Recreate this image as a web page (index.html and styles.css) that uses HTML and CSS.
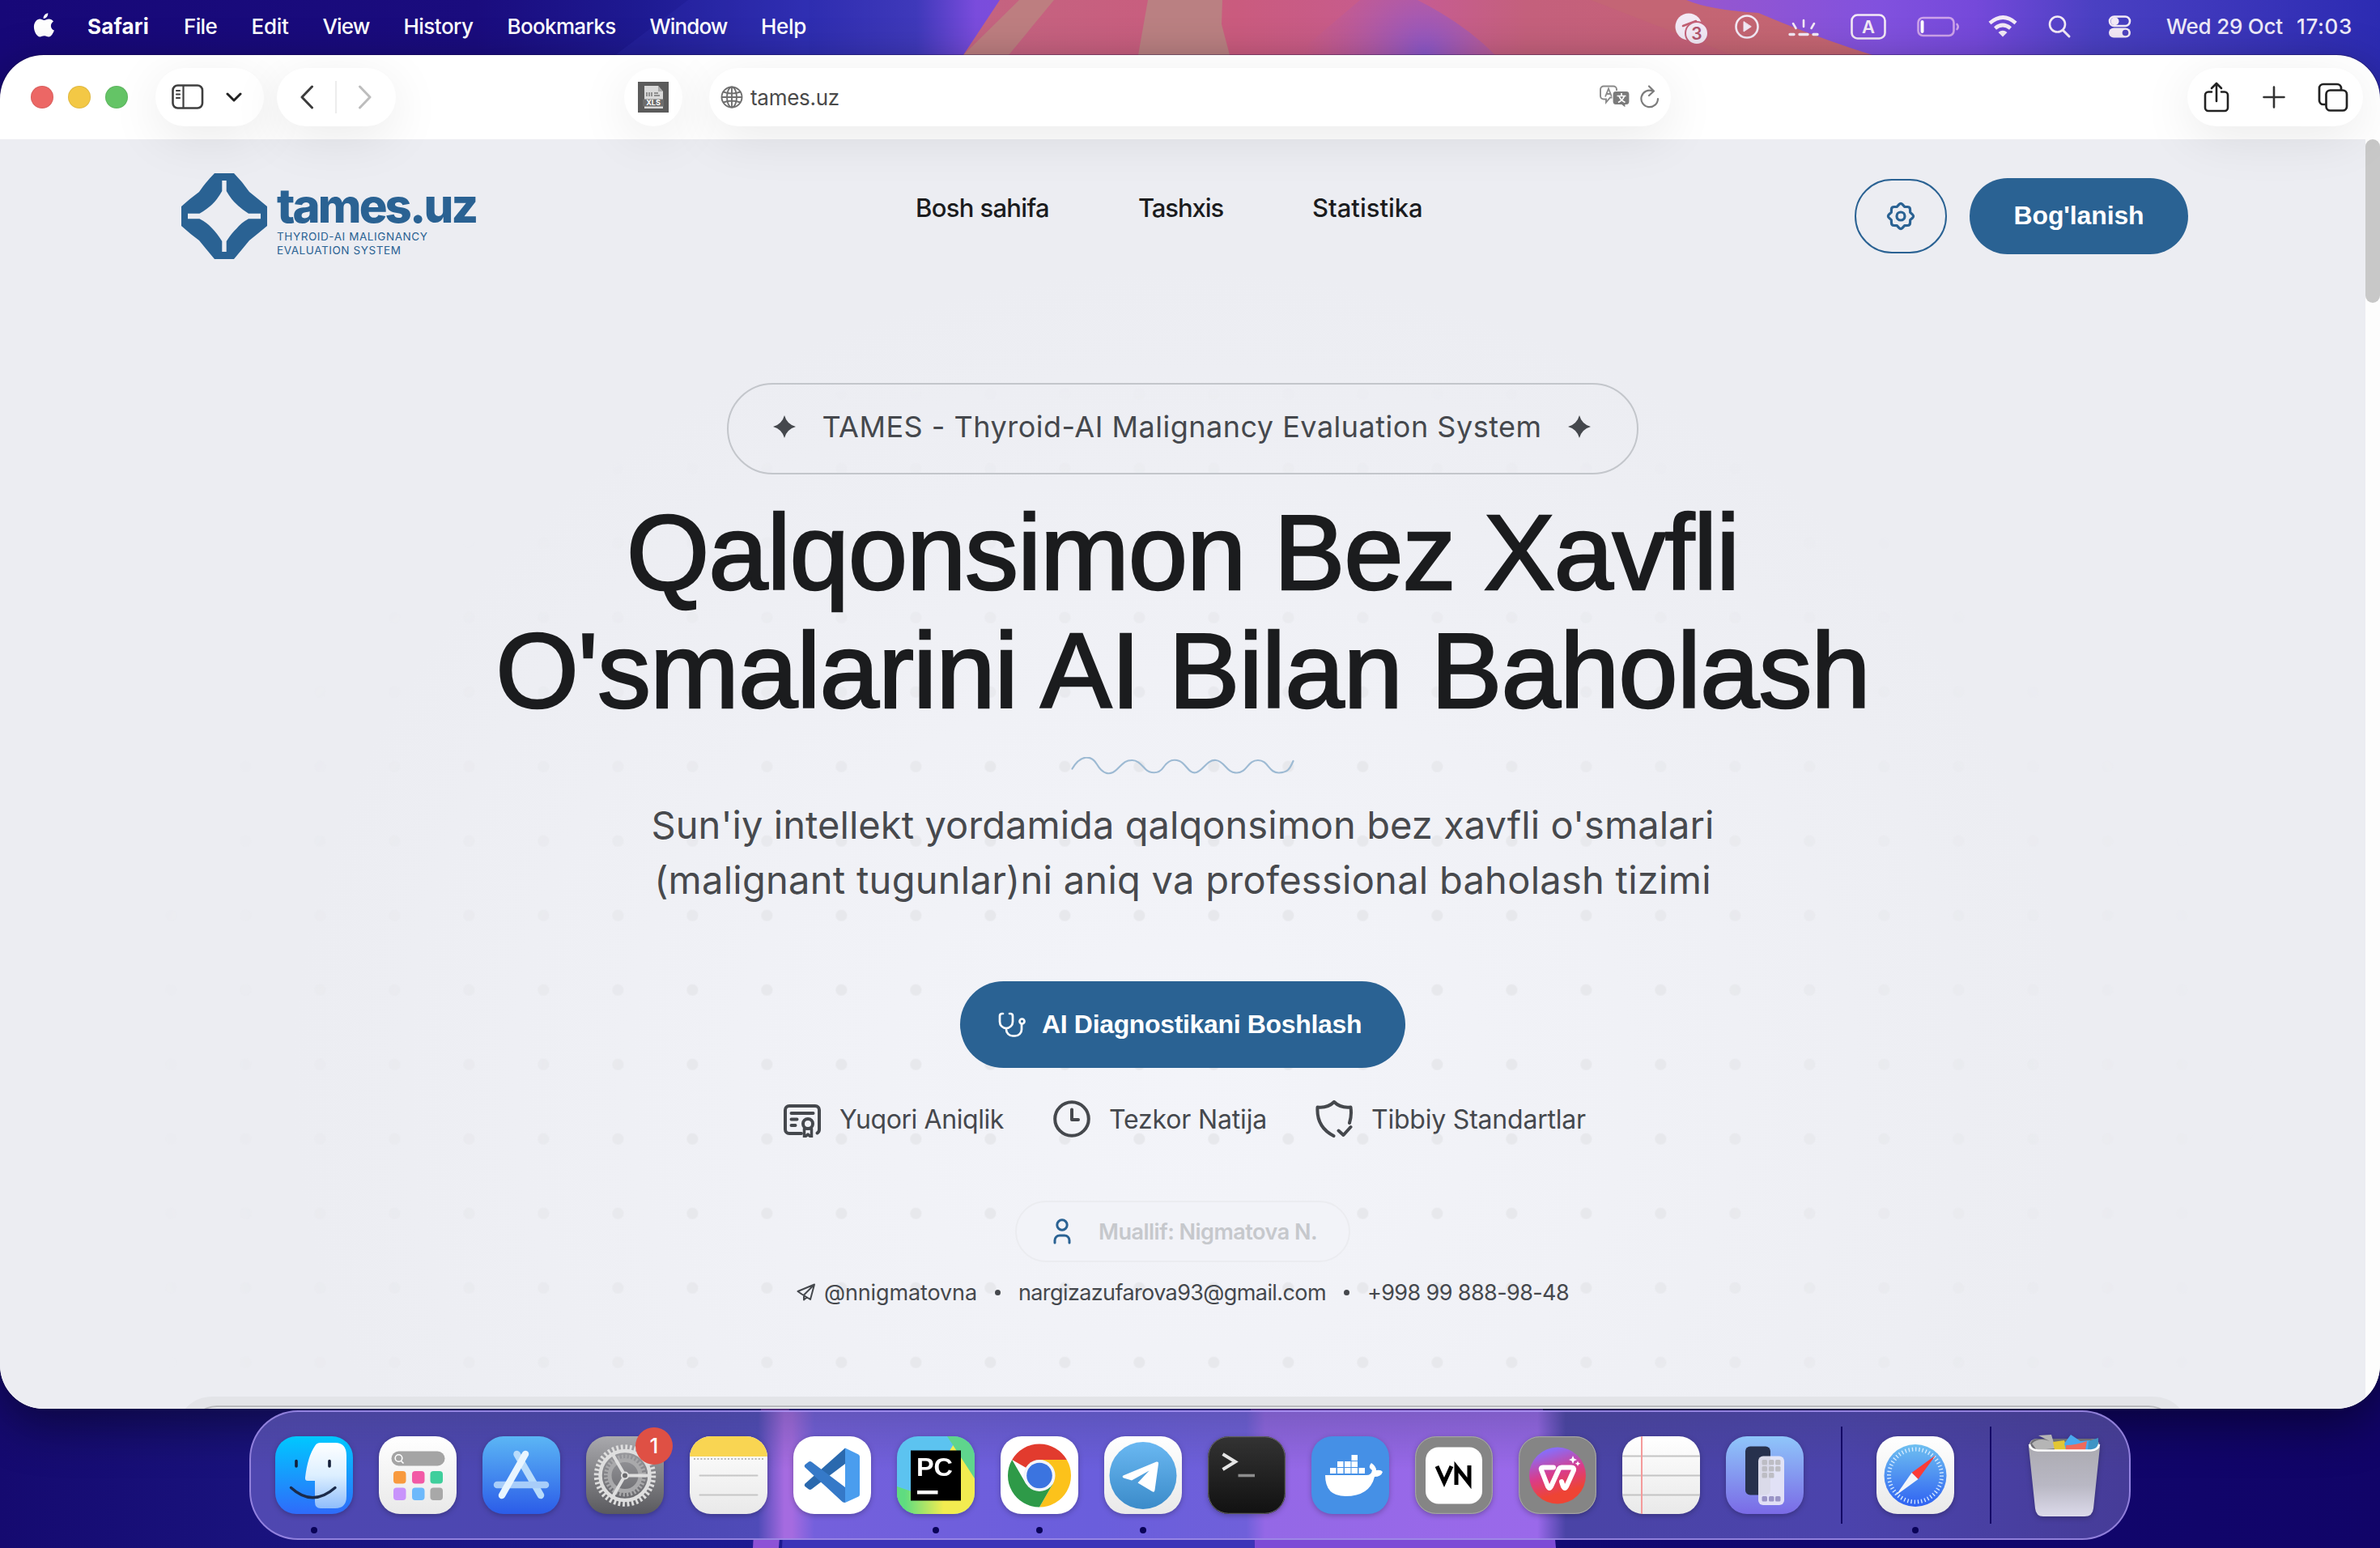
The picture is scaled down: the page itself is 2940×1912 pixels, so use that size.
FILE: index.html
```html
<!DOCTYPE html>
<html lang="uz">
<head>
<meta charset="utf-8">
<title>tames.uz</title>
<link rel="stylesheet" href="styles.css">
</head>
<body>
<svg class="wallpaper" viewBox="0 0 2940 1912" preserveAspectRatio="none">
  <defs>
    <linearGradient id="wTop" x1="0" y1="0" x2="2940" y2="0" gradientUnits="userSpaceOnUse">
      <stop offset="0" stop-color="#170878"/><stop offset=".2" stop-color="#1a0c7e"/><stop offset=".27" stop-color="#1e1a92"/><stop offset=".34" stop-color="#2e2db0"/><stop offset=".385" stop-color="#3f39ba"/><stop offset=".41" stop-color="#7a4cdc"/><stop offset=".7" stop-color="#9a58cc"/><stop offset=".79" stop-color="#8151de"/><stop offset=".83" stop-color="#7549da"/><stop offset=".88" stop-color="#4a40c2"/><stop offset="1" stop-color="#2c2bb2"/>
    </linearGradient>
    <linearGradient id="wPink" x1="1190" y1="0" x2="2313" y2="0" gradientUnits="userSpaceOnUse">
      <stop offset="0" stop-color="#c46480"/><stop offset=".3" stop-color="#ca5b7e"/><stop offset=".5" stop-color="#c65c92"/><stop offset=".62" stop-color="#c4607c"/><stop offset="1" stop-color="#c66274"/>
    </linearGradient>
    <radialGradient id="wGlow" cx="1760" cy="68" r="150" gradientUnits="userSpaceOnUse"><stop offset="0" stop-color="#8a58cc"/><stop offset="1" stop-color="#b65aa4" stop-opacity="0"/></radialGradient>
    <linearGradient id="wLow" x1="0" y1="0" x2="2940" y2="0" gradientUnits="userSpaceOnUse">
      <stop offset="0" stop-color="#150a70"/><stop offset=".1" stop-color="#19127c"/><stop offset=".3" stop-color="#1d1b92"/><stop offset=".7" stop-color="#110870"/><stop offset="1" stop-color="#110468"/>
    </linearGradient>
  </defs>
  <rect width="2940" height="956" fill="url(#wTop)"/>
  <path d="M760 68L850 0H1000V68Z" fill="#3535bd" opacity=".2"/>
  <path d="M1190 68L1235 0H2083Q2110 12 2172 16Q2240 45 2313 68Z" fill="url(#wPink)"/>
  <path d="M1190 68L1259 0H1302L1246 68Z" fill="#bd7e80"/>
  <path d="M1418 0H1510L1509 30L1519 68H1406Z" fill="#ba8082"/>
  <path d="M1600 68L1680 0H1751Q1810 30 1847 68Z" fill="url(#wGlow)"/>
  <path d="M1965 0H2083Q2110 12 2172 16Q2240 45 2313 68H2140Z" fill="#c46a70" opacity=".5"/>
  <rect y="956" width="2940" height="956" fill="url(#wLow)"/>
  <path d="M940 1740H975L962 1912H930Z" fill="#8d52d6"/>
  <path d="M975 1740H1545L1550 1912H966Z" fill="#3c34b8"/>
  <path d="M1545 1740H1906L1922 1912H1550Z" fill="#7d4bd6"/>
</svg>
<div class="screen">
  <header class="menubar">
    <svg class="apple" viewBox="0 0 26 31"><path d="M13 9c1.600 0 3.400-1.600 6-1.600 2.200 0 4.300 1.200 5.500 3-4.600 2.800-3.900 9.200.9 11.100-1 3-3.600 8-6.600 8.100-2 .1-2.900-1.300-5.500-1.300s-3.500 1.200-5.400 1.300C4 29.700.4 22.600.4 17.300.4 11.600 4 7.600 7.700 7.600c2.300 0 4 1.400 5.300 1.400zM17.800.2c.3 3.600-2.400 6.700-5.700 6.700C11.800 3.500 14.600.500 17.800.2z" fill="#fff"/></svg>
    <nav class="menus">
      <b class="m1">Safari</b><span class="m2">File</span><span class="m3">Edit</span><span class="m4">View</span><span class="m5">History</span><span class="m6">Bookmarks</span><span class="m7">Window</span><span class="m8">Help</span>
    </nav>
    <svg class="status" viewBox="2060 0 580 68" fill="none" stroke="#f3eaf6" stroke-width="2.600" stroke-linecap="round" stroke-linejoin="round">
      <circle cx="2086" cy="33" r="16.500" fill="#f3eaf6" stroke="none"/><path d="M2079 32l16-6-3 12" stroke="#c25f72"/><circle cx="2096" cy="41" r="14" fill="#f3eaf6" stroke="#c4627a" stroke-width="2"/><text x="2096" y="48.500" text-anchor="middle" class="stxt" fill="#b3566e" stroke="none">3</text>
      <circle cx="2158" cy="33" r="13.500"/><path d="M2154 27v12l9-6z" fill="#f3eaf6" stroke-width="1"/>
      <path d="M2228 25v8M2215 29l3.500 6M2241 29l-3.500 6"/><path d="M2211 42.500h5M2223 42.500h10M2240 42.500h5" stroke-width="3.400"/>
      <rect x="2287.500" y="18.500" width="41" height="29" rx="7"/><text x="2308" y="41" text-anchor="middle" class="stxt a" fill="#f3eaf6" stroke="none">A</text>
      <rect x="2369.500" y="22" width="44" height="22" rx="6" stroke="#cda3ea"/><path d="M2374.500 27v12" stroke="#fff" stroke-width="4"/><path d="M2417.500 30q2.500 3 0 6" stroke="#cda3ea"/>
      <g stroke-width="4.600" stroke-linecap="butt"><path d="M2458 28.500q16.500-14 32 0M2464.500 35q9.500-8 19 0"/></g><path d="M2468.500 40q5.500-4.500 11 0l-5.500 5.500z" fill="#f3eaf6" stroke="none"/>
      <circle cx="2541.500" cy="30" r="9.500"/><path d="M2548.500 37.500l7.500 7.500" stroke-width="3"/>
      <rect x="2606" y="20.500" width="25" height="11.500" rx="5.700"/><circle cx="2612.500" cy="26.300" r="5" fill="#f3eaf6" stroke="none"/><rect x="2605" y="34.500" width="27" height="12" rx="6" fill="#f3eaf6" stroke="none"/><circle cx="2625.500" cy="40.500" r="3.800" fill="#5045c0" stroke="none"/>
    </svg>
    <div class="clock"><span class="date">Wed 29 Oct</span><span class="time">17:03</span></div>
  </header>

  <main class="window">
    <div class="toolbar">
      <div class="lights"><i class="r"></i><i class="y"></i><i class="g"></i></div>
      <div class="pill side">
        <svg width="40" height="32" viewBox="0 0 40 32" fill="none" stroke="#3f3f3f" stroke-width="2.600" stroke-linecap="round"><rect x="1.500" y="1.500" width="36.500" height="28" rx="6"/><path d="M14.500 2v27M6 8h4M6 12.500h4M6 17h4" stroke-width="2.200"/></svg>
        <svg width="20" height="12" viewBox="0 0 20 12" fill="none" stroke="#222" stroke-width="3" stroke-linecap="round" stroke-linejoin="round"><path d="M2 2l8 8 8-8"/></svg>
      </div>
      <div class="pill nav2">
        <svg width="18" height="30" viewBox="0 0 18 30" fill="none" stroke="#3c3c3c" stroke-width="3" stroke-linecap="round" stroke-linejoin="round"><path d="M15.500 2L3 15l12.500 13"/></svg>
        <i class="vr"></i>
        <svg width="18" height="30" viewBox="0 0 18 30" fill="none" stroke="#bdbdbd" stroke-width="3" stroke-linecap="round" stroke-linejoin="round"><path d="M2.500 2L15 15 2.500 28"/></svg>
      </div>
      <div class="pill xls">
        <svg width="38" height="38" viewBox="0 0 38 38"><rect width="38" height="38" fill="#5b5b5b"/><path d="M8 5h17l6 7v21H8z" fill="#d9d9d9"/><path d="M25 5v7h6z" fill="#aaa"/><path d="M11 18v-5M14 18v-5M17 18v-5M20 17h7M20 14h5" stroke="#777" stroke-width="1.500"/><rect x="6" y="21.500" width="26" height="9" fill="#6c6c6c"/><text x="19" y="29" text-anchor="middle" class="xt">XLS</text></svg>
      </div>
      <div class="pill addr">
        <svg width="28" height="28" viewBox="0 0 28 28" fill="none" stroke="#6f6f6f" stroke-width="1.900"><circle cx="14" cy="14" r="12.500"/><ellipse cx="14" cy="14" rx="6" ry="12.500"/><path d="M14 1.500v25M1.500 14h25M3.500 7.500q10.500 4 21 0M3.500 20.500q10.500-4 21 0"/></svg>
        <span class="url">tames.uz</span>
        <svg class="tr" width="40" height="30" viewBox="0 0 40 30"><path d="M6 1.500h12a4 4 0 0 1 4 4v10H14l-5 6v-4H6a4 4 0 0 1-4-4v-8a4 4 0 0 1 4-4z" fill="none" stroke="#8a8a8a" stroke-width="1.900"/><path d="M8 14.500l4-10 4 10M9.500 11h5" fill="none" stroke="#8a8a8a" stroke-width="1.800"/><path d="M21 7.500h13a4 4 0 0 1 4 4v9a4 4 0 0 1-4 4h-1v4l-5-4h-7a4 4 0 0 1-4-4v-9a4 4 0 0 1 4-4z" fill="#7b7b7b" stroke="#fff" stroke-width="1.200"/><path d="M28 10v3M22.500 13.500h11M24 21.500q6-3 7.500-8M32.500 21.500q-6-3-7.500-8" fill="none" stroke="#fff" stroke-width="1.700"/></svg>
        <svg width="24" height="30" viewBox="0 0 24 30" fill="none" stroke="#7c7c7c" stroke-width="2.200" stroke-linecap="round" stroke-linejoin="round"><path d="M15.500 7.300A10.300 10.300 0 1 0 22 17M11 1.500l6 6-6 5.500"/></svg>
      </div>
      <div class="pill acts">
        <svg width="32" height="38" viewBox="0 0 32 38" fill="none" stroke="#222" stroke-width="2.600" stroke-linecap="round" stroke-linejoin="round"><path d="M10 12.500H6a4 4 0 0 0-4 4V32a4 4 0 0 0 4 4h20a4 4 0 0 0 4-4V16.500a4 4 0 0 0-4-4h-4M16 24V2.500M10 8l6-6 6 6"/></svg>
        <svg width="28" height="28" viewBox="0 0 28 28" stroke="#333" stroke-width="2.600" stroke-linecap="round"><path d="M14 1.500v25M1.500 14h25"/></svg>
        <svg width="38" height="36" viewBox="0 0 38 36" fill="none" stroke="#222" stroke-width="2.700" stroke-linejoin="round"><rect x="10.500" y="9.500" width="25.500" height="25" rx="5"/><path d="M10 27H7a5 5 0 0 1-5-5V7a5 5 0 0 1 5-5h17a5 5 0 0 1 5 5v2"/></svg>
      </div>
    </div>

    <div class="viewport">
      <div class="page">
        <header class="site">
          <div class="logo">
            <svg width="106" height="106" viewBox="0 0 106 106"><path d="M41 0H65Q75 10 84 23Q94 31 106 41V65Q94 75 84 83Q75 94 65 106H41Q31 94 22 83Q11 75 0 65V41Q11 31 22 23Q31 10 41 0Z" fill="#2a6293"/><path d="M50.300 9H55.700V22Q62 33 68.500 38.500Q74 44 83 49.800H98V56.200H83Q74 61 68.500 68Q62 74 55.700 84V97H50.300V84Q44 74 38 68Q32 61 22.500 56.200H8V49.800H22.500Q32 44 38 38.500Q44 33 50.300 22Z" fill="#ecedf2"/></svg>
            <div class="brand"><span class="name">tames.uz</span><span class="sub">THYROID-AI MALIGNANCY</span><span class="sub">EVALUATION SYSTEM</span></div>
          </div>
          <nav class="links"><a class="l1">Bosh sahifa</a><a class="l2">Tashxis</a><a class="l3">Statistika</a></nav>
          <div class="ctas">
            <button class="gear"><svg width="36" height="36" viewBox="0 0 36 36" fill="none" stroke="#2a6293" stroke-width="3.200" stroke-linejoin="round"><path d="M15.800 3.600Q18 1.200 20.200 3.600L22.700 6.300L26.500 6.500Q29.400 6.600 29.500 9.500L29.700 13.300L32.400 15.800Q34.800 18 32.400 20.200L29.700 22.700L29.500 26.500Q29.400 29.400 26.500 29.500L22.700 29.700L20.200 32.400Q18 34.800 15.800 32.400L13.300 29.700L9.500 29.500Q6.600 29.400 6.500 26.500L6.300 22.700L3.600 20.200Q1.200 18 3.600 15.800L6.300 13.300L6.500 9.500Q6.600 6.600 9.500 6.500L13.300 6.300Z"/><circle cx="18" cy="18" r="5"/></svg></button>
            <button class="contact"><span>Bog'lanish</span></button>
          </div>
        </header>
        <section class="hero">
          <div class="badge">
            <svg width="28" height="28" viewBox="0 0 28 28"><path d="M14 0Q17 11 28 14Q17 17 14 28Q11 17 0 14Q11 11 14 0Z" fill="#45484d"/></svg>
            <span>TAMES - Thyroid-AI Malignancy Evaluation System</span>
            <svg width="28" height="28" viewBox="0 0 28 28"><path d="M14 0Q17 11 28 14Q17 17 14 28Q11 17 0 14Q11 11 14 0Z" fill="#45484d"/></svg>
          </div>
          <h1><span class="h1a">Qalqonsimon Bez Xavfli</span><br><span class="h1b">O'smalarini AI Bilan Baholash</span></h1>
          <svg class="wave" width="276" height="22" viewBox="0 0 276 22" fill="none" stroke="#9dbad3" stroke-width="2.200" stroke-linecap="round"><path d="M1.500 14.500C12-3 25-3 32 9S48 24 57 15S68 4 75.500 4S87 10 92 15S108 22 114 13S126 2 134 5S146 22 155 19S168 3 179 4S192 20 205 19.500S218 4 231 4S244 20 257 19.500S271 12 274.500 5"/></svg>
          <p class="lead"><span class="p1">Sun'iy intellekt yordamida qalqonsimon bez xavfli o'smalari</span><br><span class="p2">(malignant tugunlar)ni aniq va professional baholash tizimi</span></p>
          <button class="start"><svg width="34" height="31" viewBox="0 0 34 31" fill="none" stroke="#fff" stroke-width="2.700" stroke-linecap="round" stroke-linejoin="round"><path d="M6 2H4.500A3 3 0 0 0 2 5v7a8 8 0 0 0 16 0V5a3 3 0 0 0-2.500-3H14M10 20v1.500a8 8 0 0 0 8 8h3a8 8 0 0 0 8-8V15"/><circle cx="29.500" cy="11.500" r="3"/></svg><span>AI Diagnostikani Boshlash</span></button>
          <div class="feats">
            <div class="f1"><svg width="46" height="46" viewBox="0 0 46 46" fill="none" stroke="#45484d" stroke-width="4" stroke-linecap="round" stroke-linejoin="round"><path d="M22 41H7a5 5 0 0 1-5-5V12a5 5 0 0 1 5-5h32a5 5 0 0 1 5 5v24q0 3-2.500 4.500"/><path d="M9.500 16h27M9.500 23.500h7M9.500 31h5"/><circle cx="30" cy="29" r="6"/><path d="M25.500 35v11l4.500-4 4.500 4V35z" stroke-width="3.500"/></svg><span>Yuqori Aniqlik</span></div>
            <div class="f2"><svg width="46" height="46" viewBox="0 0 46 46" fill="none" stroke="#45484d" stroke-width="4" stroke-linecap="round" stroke-linejoin="round"><circle cx="23" cy="23" r="20.800"/><path d="M23 11.500V24h8"/></svg><span>Tezkor Natija</span></div>
            <div class="f3"><svg width="46" height="46" viewBox="0 0 46 46" fill="none" stroke="#45484d" stroke-width="4" stroke-linecap="round" stroke-linejoin="round"><path d="M22.500 44Q1 33 2.500 8.500Q15 10 23 2Q31 10 43.500 8.500Q45 19 42 28"/><path d="M28.500 37.500l6 5.500 9-10"/></svg><span>Tibbiy Standartlar</span></div>
          </div>
          <div class="author"><svg width="22" height="32" viewBox="0 0 22 32" fill="none" stroke="#2a6293" stroke-width="3" stroke-linecap="round"><circle cx="11" cy="8" r="6.200"/><path d="M2 30v-3a6 6 0 0 1 6-6h6a6 6 0 0 1 6 6v3"/></svg><span>Muallif: Nigmatova N.</span></div>
          <div class="contacts"><svg width="24" height="22" viewBox="0 0 24 22" fill="none" stroke="#45484d" stroke-width="2" stroke-linejoin="round"><path d="M22 1.500L1.500 10l5 3.500L17 20zM22 1.500L9 14.500V20.500l4-3.500"/></svg><span class="c1">@nnigmatovna</span><i></i><span class="c2">nargizazufarova93@gmail.com</span><i></i><span class="c3">+998 99 888-98-48</span></div>
        </section>
        <div class="next"><div class="card"><div class="inner"></div></div></div>
      </div>
      <div class="track"><i></i></div>
    </div>
  </main>

  <footer class="dock">
    <svg width="0" height="0" class="defs"><defs>
      <linearGradient id="gF" x2="0" y2="1"><stop stop-color="#00c8ff"/><stop offset="1" stop-color="#2f6bfa"/></linearGradient>
      <linearGradient id="gF2" x2="0" y2="1"><stop stop-color="#fff"/><stop offset=".5" stop-color="#dcefff"/><stop offset="1" stop-color="#8fbdfb"/></linearGradient>
      <linearGradient id="gW" x2="0" y2="1"><stop stop-color="#fff"/><stop offset="1" stop-color="#e9e9e9"/></linearGradient>
      <linearGradient id="gA" x2="0" y2="1"><stop stop-color="#5bb6f5"/><stop offset="1" stop-color="#2b5ce8"/></linearGradient>
      <linearGradient id="gS" x2="0" y2="1"><stop stop-color="#a9a9ad"/><stop offset="1" stop-color="#5a5a5e"/></linearGradient>
      <linearGradient id="gT" x2="0" y2="1"><stop stop-color="#333"/><stop offset="1" stop-color="#111"/></linearGradient>
      <linearGradient id="gTg" x2="0" y2="1"><stop stop-color="#6ab8f2"/><stop offset="1" stop-color="#3b8bc9"/></linearGradient>
      <linearGradient id="gWp" x2=".3" y2="1"><stop stop-color="#8a6cf6"/><stop offset=".15" stop-color="#8a6cf6"/><stop offset=".55" stop-color="#d93c8c"/><stop offset=".9" stop-color="#ee4434"/></linearGradient>
      <linearGradient id="gM" x2="0" y2="1"><stop stop-color="#8fc6fa"/><stop offset="1" stop-color="#7a6ae6"/></linearGradient>
      <linearGradient id="gSf" x2="0" y2="1"><stop stop-color="#6fc0f0"/><stop offset="1" stop-color="#2f62f2"/></linearGradient>
      <linearGradient id="gPc" x1=".1" x2=".6" y2="0"><stop stop-color="#5fdc80"/><stop offset="1" stop-color="#f2ec50"/></linearGradient>
      <linearGradient id="gTr" x2="0" y2="1"><stop stop-color="#a9a8ae"/><stop offset=".6" stop-color="#b9b8c4"/><stop offset="1" stop-color="#dcdaea"/></linearGradient>
      <clipPath id="sq"><rect width="96" height="96" rx="26"/></clipPath>
    </defs></svg>
    <div class="app on"><svg viewBox="0 0 96 96"><g clip-path="url(#sq)"><rect width="96" height="96" fill="url(#gF)"/><path d="M56 8H74Q88 8 88 24V74Q88 89 74 89H56Q49 89 49 81V55H40Q36.500 55 37 51Q40 25 49 12Q51 8 56 8Z" fill="url(#gF2)"/></g><path d="M26 30.500v6.500M67 30.500v6.500" stroke="#15203a" stroke-width="3.600" stroke-linecap="round"/><path d="M19.500 63.500Q46 88 74 63.500" fill="none" stroke="#1b2b4a" stroke-width="3.400" stroke-linecap="round"/></svg></div>
    <div class="app"><svg viewBox="0 0 96 96"><rect width="96" height="96" rx="26" fill="url(#gW)"/><rect x="15.500" y="18.500" width="66" height="18" rx="9" fill="#a4a4a4"/><circle cx="24.500" cy="27" r="4.300" fill="none" stroke="#fff" stroke-width="1.600"/><path d="M27.500 30.500l3 3" stroke="#fff" stroke-width="1.600"/><rect x="18" y="43" width="15.500" height="15.500" rx="4" fill="#f89a3e"/><rect x="41" y="43" width="15.500" height="15.500" rx="4" fill="#f25aa6"/><rect x="63.500" y="43" width="15.500" height="15.500" rx="4" fill="#3fcf9c"/><rect x="18" y="63.500" width="15.500" height="15.500" rx="4" fill="#c893fb"/><rect x="41" y="63.500" width="15.500" height="15.500" rx="4" fill="#6db9fb"/><rect x="63.500" y="63.500" width="15.500" height="15.500" rx="4" fill="#a8a8a8"/></svg></div>
    <div class="app"><svg viewBox="0 0 96 96"><rect width="96" height="96" rx="26" fill="url(#gA)"/><g stroke-linecap="round" stroke-width="8.500"><path d="M42.500 22L72 73" stroke="#b9dcfb"/><path d="M18 60H78" stroke="#a8cdf9"/><path d="M53 22L24 73" stroke="#e8f5ff"/></g></svg></div>
    <div class="app"><svg viewBox="0 0 96 96"><rect width="96" height="96" rx="26" fill="url(#gS)"/><g fill="none" stroke="#dedede"><circle cx="48" cy="48.500" r="35" stroke-width="6.500" stroke-dasharray="2.750 2.750"/><circle cx="48" cy="48.500" r="30.500" stroke-width="4.500"/><circle cx="48" cy="48.500" r="23.500" stroke="#a9a9ab" stroke-width="5" stroke-dasharray="2.300 2.300"/><circle cx="48" cy="48.500" r="19" stroke="#a9a9ab" stroke-width="5"/><path d="M48 48.500H78M48 48.500L33 22.500M48 48.500L33 74.500" stroke-width="4"/></g><circle cx="48" cy="48.500" r="4" fill="#6b6b6e" stroke="#dedede" stroke-width="2"/></svg><em>1</em></div>
    <div class="app"><svg viewBox="0 0 96 96"><g clip-path="url(#sq)"><rect width="96" height="96" fill="url(#gW)"/><rect width="96" height="25" fill="#f9d552"/></g><path d="M5 28H92" stroke="#b8b8b8" stroke-width="2" stroke-dasharray="2 2.200"/><path d="M12.500 48.500H83.500M12.500 72.500H83.500" stroke="#c6c6c6" stroke-width="2" stroke-linecap="round"/></svg></div>
    <div class="app"><svg viewBox="0 0 96 96"><rect width="96" height="96" rx="26" fill="#fff"/><path d="M64 14.500L14.500 58.500Q13 60.500 14.500 62L19 65.500Q21 66.500 23 65L64 34Z" fill="#2a69ae"/><path d="M14.500 38.500Q13 36.500 14.500 35L19 31.500Q21 30.500 23 32L64 63V82Q61 82 59.500 80Z" fill="#3579c8"/><path d="M64 14.500L80.500 22.500Q82 23.500 82 25V72Q82 73.500 80.500 74.500L64 82Z" fill="#4a9dee"/></svg></div>
    <div class="app on"><svg viewBox="0 0 96 96"><g clip-path="url(#sq)"><rect width="96" height="96" fill="#5cc3f0"/><path d="M0 62L56 96H0Z" fill="#5fdc80"/><path d="M0 62L30 72L70 10L96 52V96H0Z" fill="url(#gPc)"/><path d="M62 0L96 52V0Z" fill="#5fd58d"/></g><rect x="17" y="17.500" width="62" height="62" fill="#000"/><text x="24" y="49" class="pc" textLength="45" lengthAdjust="spacingAndGlyphs">PC</text><rect x="25" y="67" width="25.500" height="4.500" fill="#fff"/></svg></div>
    <div class="app on"><svg viewBox="0 0 96 96"><rect width="96" height="96" rx="26" fill="#fff"/><path d="M48 48.500L14.200 29A39 39 0 0 1 81.800 29Z" fill="#e23b2e"/><path d="M48 29H81.800A39 39 0 0 1 48 87.500L64.900 58.200Z" fill="#fcc21b"/><path d="M14.200 29A39 39 0 0 0 48 87.500L64.900 58.200L48 68L31.100 58.200Z" fill="#2e9a48"/><circle cx="48" cy="48.500" r="19.500" fill="#f3f5fb"/><circle cx="48" cy="48.500" r="15.800" fill="#3b74e0"/></svg></div>
    <div class="app on"><svg viewBox="0 0 96 96"><rect width="96" height="96" rx="26" fill="url(#gW)"/><circle cx="48" cy="48.500" r="41.500" fill="url(#gTg)"/><path d="M23.500 48.500L64.500 31.500Q67.500 31 67 34L62.500 66.500Q62 70 59 68L41.500 57.500L55.500 42.500L34 54.500L24 51.500Q21.500 50 23.500 48.500Z" fill="#fff"/></svg></div>
    <div class="app"><svg viewBox="0 0 96 96"><rect width="96" height="96" rx="26" fill="url(#gT)"/><rect x=".7" y=".7" width="94.600" height="94.600" rx="25" fill="none" stroke="#6a6a6a" stroke-width="1"/><path d="M18.500 22L34 31.500L18.500 41" fill="none" stroke="#e6e6e6" stroke-width="4"/><path d="M37.500 48.500H58" stroke="#8d8d8d" stroke-width="3.600"/></svg></div>
    <div class="app"><svg viewBox="0 0 96 96"><rect width="96" height="96" rx="26" fill="#4590e6"/><path d="M17 48H68Q74 48 75 42Q69 38 74 33Q80 37 80 42Q86 41 88 44Q86 50 78 50Q72 74 42 74Q17 74 17 48Z" fill="#fff"/><path d="M23 39h7.500v7H23zM32 39h7.500v7H32zM41 39h7.500v7H41zM49.500 39H57v7h-7.500zM58.500 39H66v7h-7.500zM32 31h7.500v7H32zM41 31h7.500v7H41zM49.500 31H57v7h-7.500zM49.500 23H57v7h-7.500z" fill="#fff"/></svg></div>
    <div class="app"><svg viewBox="0 0 96 96"><rect width="96" height="96" rx="26" fill="#858585"/><rect x=".7" y=".7" width="94.600" height="94.600" rx="25" fill="none" stroke="#aaa" stroke-width="1"/><rect x="13" y="13.500" width="70" height="70" rx="16" fill="#fff"/><path d="M27 37L36 57L45 37M51 60V38L67 58V36" fill="none" stroke="#000" stroke-width="5"/></svg></div>
    <div class="app"><svg viewBox="0 0 96 96"><rect width="96" height="96" rx="26" fill="#858585"/><rect x=".7" y=".7" width="94.600" height="94.600" rx="25" fill="none" stroke="#aaa" stroke-width="1"/><circle cx="48" cy="48.500" r="35" fill="url(#gWp)"/><path d="M43 38.500H30Q27 38.500 28 41.500L36 62Q38 66 40 62L50 40Q51 38.500 53 38.500H65Q69 38.500 68 42L59 62Q57 66 55 62L53 56" fill="none" stroke="#fff" stroke-width="6" stroke-linejoin="round" stroke-linecap="round"/><path d="M67 24l1.500 3.500 3.500 1.500-3.500 1.500L67 34l-1.500-3.500L62 29l3.500-1.500zM73 30.500l1 2.300 2.300 1-2.300 1-1 2.300-1-2.300-2.300-1 2.300-1z" fill="#fff"/></svg></div>
    <div class="app"><svg viewBox="0 0 96 96"><g clip-path="url(#sq)"><rect width="96" height="96" fill="url(#gW)"/><path d="M0 24.500H96M0 48.500H96M0 72.500H96" stroke="#c4c4c4" stroke-width="2"/><path d="M24 0V96" stroke="#f49a9a" stroke-width="2"/></g></svg></div>
    <div class="app"><svg viewBox="0 0 96 96"><rect width="96" height="96" rx="26" fill="url(#gM)"/><rect x="24" y="12.500" width="31" height="60" rx="6" fill="#27314d"/><rect x="40" y="24.500" width="32" height="60.500" rx="6" fill="#e9e8f6" fill-opacity=".92"/><g fill="#bdbdc4"><rect x="44.500" y="29" width="6.500" height="6.500" rx="1.500"/><rect x="53" y="29" width="6.500" height="6.500" rx="1.500"/><rect x="61" y="29" width="6.500" height="6.500" rx="1.500"/><rect x="44.500" y="37" width="6.500" height="6.500" rx="1.500"/><rect x="53" y="37" width="6.500" height="6.500" rx="1.500"/><rect x="61" y="37" width="6.500" height="6.500" rx="1.500"/><rect x="44.500" y="45" width="6.500" height="6.500" rx="1.500"/><rect x="53" y="45" width="6.500" height="6.500" rx="1.500"/></g><g fill="#9a94c6"><rect x="44.500" y="74" width="6.500" height="6.500" rx="1.500"/><rect x="53" y="74" width="6.500" height="6.500" rx="1.500"/><rect x="61" y="74" width="6.500" height="6.500" rx="1.500"/></g></svg></div>
    <i class="sep s1"></i>
    <div class="app on"><svg viewBox="0 0 96 96"><rect width="96" height="96" rx="26" fill="url(#gW)"/><circle cx="48" cy="48.500" r="38.500" fill="url(#gSf)"/><circle cx="48" cy="48.500" r="32.500" fill="none" stroke="#d8ecff" stroke-width="5" stroke-dasharray="1.300 2.950"/><path d="M73 23.500L43.500 45L51.500 53Z" fill="#fb3b36"/><path d="M24 73L43.500 45L51.500 53Z" fill="#f4f6fa"/></svg></div>
    <i class="sep s2"></i>
    <div class="app bin"><svg viewBox="0 0 96 102"><path d="M4 16Q5 6 14 6H82Q91 6 92 16L84 92Q83 102 73 102H22Q13 102 12 92Z" fill="url(#gTr)"/><path d="M6 12Q8 6 16 6H80Q89 6 90 13Q88 20 80 20H15Q7 19 6 12Z" fill="#6e6e74"/><path d="M8 12Q16 4 30 9L16 2L32 1L37 18L14 20Z" fill="#b5b5b5"/><path d="M34 10L48 8L52 20H36Z" fill="#e2c634"/><path d="M48 12L56 1L68 9L80 8L78 20H50Z" fill="#49a8ee"/><path d="M50 14Q62 14 76 9L74 20H50Z" fill="#f06a5a"/><path d="M78 9L90 5V16L84 20H77Z" fill="#3f94c4"/><path d="M5 13Q6 20 15 20.500H81Q90 20 91 13" fill="none" stroke="#fff" stroke-width="2.600"/></svg></div>
  </footer>
</div>
</body>
</html>
```
FILE: styles.css
```css
* { box-sizing: border-box; }
body { margin: 0; width: 2940px; height: 1912px; overflow: hidden; position: relative; font-family: Inter, "Liberation Sans", sans-serif; }
.wallpaper { position: absolute; inset: 0; width: 2940px; height: 1912px; }
.screen { position: relative; width: 2940px; height: 1912px; display: flex; flex-direction: column; }
svg { display: block; flex: none; }
button { border: 0; padding: 0; margin: 0; font: inherit; background: none; display: flex; align-items: center; justify-content: center; }
span { white-space: nowrap; }

/* menu bar */
.menubar { height: 68px; flex: none; display: flex; align-items: center; padding-left: 41px; padding-bottom: 3px; color: #fff; font-size: 26px; font-weight: 500; }
.apple { width: 27px; height: 31px; margin-top: -3px; }
.menus { display: flex; margin-left: 40px; }
.menus b { font-weight: 700; }
.menus > * { flex: none; }
.m1 { width: 119px; letter-spacing: .18px; }
.m2 { width: 83.500px; letter-spacing: -.68px; }
.m3 { width: 88px; letter-spacing: -.29px; }
.m4 { width: 100px; letter-spacing: -.85px; }
.m5 { width: 128px; letter-spacing: -.52px; }
.m6 { width: 176px; letter-spacing: -.65px; }
.m7 { width: 137.500px; letter-spacing: -.86px; }
.m8 { width: 60px; letter-spacing: -.32px; }
.status { width: 580px; height: 68px; margin-left: auto; margin-top: 3px; }
.stxt { font: 600 21px Inter, sans-serif; }
.stxt.a { font-size: 22px; }
.clock { width: 264px; margin-left: 36px; display: flex; gap: 17px; color: #eeeaf8; }
.date { letter-spacing: -.22px; }
.time { letter-spacing: .65px; }

/* browser window */
.window { height: 1672px; flex: none; border-radius: 54px; overflow: hidden; background: #fff; display: flex; flex-direction: column; box-shadow: 0 0 0 1px rgba(20, 10, 60, .35), 0 20px 60px rgba(0, 0, 0, .45); }
.toolbar { height: 104px; flex: none; position: relative; z-index: 2; display: flex; align-items: center; padding: 0 21px 0 38px; }
.lights { display: flex; gap: 18px; }
.lights i { width: 28px; height: 28px; border-radius: 50%; border: 1px solid rgba(0, 0, 0, .08); }
.lights .r { background: #ec6765; }
.lights .y { background: #f3c845; }
.lights .g { background: #64c466; }
.pill { height: 72px; border-radius: 36px; background: #fff; box-shadow: 0 14px 64px rgba(0, 0, 0, .085); display: flex; align-items: center; flex: none; }
.side { width: 134px; margin-left: 34px; padding-left: 20px; gap: 27px; }
.nav2 { width: 147px; margin-left: 16px; justify-content: space-between; padding: 0 29px 0 28px; }
.vr { width: 2px; height: 40px; background: #ececec; }
.xls { width: 72px; margin-left: 282px; justify-content: center; }
.xt { font: 700 9px Inter, sans-serif; fill: #fff; }
.addr { width: 1188px; margin-left: 33px; padding: 0 14px 0 14px; }
.url { flex: 1; margin-left: 9px; font-size: 26px; letter-spacing: -.27px; color: #4a4a4a; }
.tr { margin-right: 11px; }
.acts { width: 217px; margin-left: auto; justify-content: space-between; padding: 0 18px 0 20px; }

.viewport { flex: 1; display: flex; min-height: 0; }
.track { width: 18px; background: #fdfdfd; }
.track i { display: block; width: 18px; height: 202px; border-radius: 9px; background: #c8c8c8; }
.page { width: 2922px; position: relative; background: radial-gradient(1100px 1000px at 1461px 1160px, #f3f4f9, #f0f1f6 50%, #ecedf2); display: flex; flex-direction: column; }
.page::before { content: ""; position: absolute; inset: 0; background-image: radial-gradient(circle, #e7e8ec 6.500px, rgba(231, 232, 236, 0) 7.500px); background-size: 92px 92px; background-position: -18.700px -7.300px; -webkit-mask-image: radial-gradient(1400px 1000px at 1461px 1200px, #000 45%, transparent 95%); mask-image: radial-gradient(1400px 1000px at 1461px 1200px, #000 45%, transparent 95%); }
.page > * { position: relative; }

/* site header */
.site { padding: 42px 219px 0 224px; display: flex; align-items: center; height: 148px; flex: none; }
.logo { display: flex; gap: 12px; width: 907px; }
.brand { display: flex; flex-direction: column; color: #2a6293; }
.name { font-size: 58px; line-height: 60px; font-weight: 800; letter-spacing: -2.900px; margin-top: 10px; }
.sub { font-size: 13.500px; line-height: 17px; letter-spacing: .58px; }
.links { display: flex; padding-bottom: 20px; color: #1b1c1e; font: 500 31px/40px Inter, sans-serif; }
.l1 { width: 275px; letter-spacing: -.66px; }
.l2 { width: 215px; letter-spacing: -1.100px; }
.l3 { width: 140px; letter-spacing: 0; }
.ctas { margin-left: auto; display: flex; align-items: center; gap: 28px; }
.gear { width: 114px; height: 92px; border-radius: 46px; border: 2px solid #2a6293; }
.contact { width: 270px; height: 94px; border-radius: 47px; background: #2a6293; color: #fff; font: 700 32px "Liberation Sans", sans-serif; padding-bottom: 2px; letter-spacing: -.13px; }

/* hero */
.hero { flex: 1; display: flex; flex-direction: column; align-items: center; padding-top: 153px; }
.badge { width: 1126px; height: 113px; border-radius: 57px; border: 2px solid #c3c6cb; display: flex; align-items: center; justify-content: space-between; padding: 0 57px 5px 55px; color: #45484d; font: 400 36px Inter, sans-serif; letter-spacing: .5px; }
h1 { margin: 24px 0 0; font: 400 132px/146px "Liberation Sans", sans-serif; color: #1b1c1e; text-align: center; -webkit-text-stroke: 2.500px #1b1c1e; }
.h1a { letter-spacing: -1.230px; }
.h1b { letter-spacing: -1.030px; }
.wave { margin-top: 33px; }
.lead { margin: 28px 0 0; font: 400 47px/68px Inter, sans-serif; color: #47494d; text-align: center; }
.p1 { letter-spacing: .06px; }
.p2 { letter-spacing: .27px; }
.start { margin-top: 91px; width: 550px; height: 107px; border-radius: 54px; background: #2a6293; color: #fff; font: 700 32px "Liberation Sans", sans-serif; letter-spacing: -.34px; gap: 20px; justify-content: flex-start; padding-left: 47px; }
.feats { margin-top: 40px; margin-left: 6px; display: flex; font: 400 32px Inter, sans-serif; color: #45484d; }
.feats > div { display: flex; align-items: center; gap: 23px; }
.f1 { width: 333px; letter-spacing: -.42px; }
.f2 { width: 324px; letter-spacing: -.16px; }
.f3 { width: 335px; letter-spacing: -.21px; }
.author { margin-top: 78px; width: 414px; height: 76px; border-radius: 38px; border: 2px solid #ebecf0; background: #f2f3f8; display: flex; align-items: center; padding-left: 45px; gap: 34px; font: 600 27px Inter, sans-serif; letter-spacing: -.5px; color: #c6c8cc; }
.contacts { margin-top: 20px; height: 34px; display: flex; align-items: center; font: 400 27px Inter, sans-serif; color: #45484d; }
.contacts i { width: 7px; height: 7px; border-radius: 50%; background: #45484d; margin: 0 22px; }
.c1 { margin-left: 10px; letter-spacing: -.12px; }
.c2 { letter-spacing: -.6px; }
.c3 { letter-spacing: -.6px; }

/* top edge of the next section */
.next { height: 15px; flex: none; overflow: hidden; display: flex; justify-content: center; }
.card { width: 2486px; flex: none; height: 120px; border-radius: 44px; background: #e3e4e8; padding: 11px 16px; }
.inner { height: 90px; border-radius: 34px; border-top: 2px solid #b9babd; background: #e7e8ec; }

/* dock */
.dock { flex: none; align-self: center; width: 2324px; height: 160px; margin-top: 2px; border-radius: 60px; border: 2px solid rgba(170, 150, 240, .75); padding: 0 30px; display: flex; gap: 32px; align-items: center; position: relative; background: linear-gradient(rgba(60, 60, 110, .28), rgba(60, 60, 110, 0) 45%), linear-gradient(90deg, #4f47b0 0, #4b47b2 20%, #4f4bb8 27%, #a56be0 28.400%, #a56be0 28.800%, #7460dc 30%, #6a5edc 45%, #6f60da 53%, #9468e6 54%, #9a69ea 68.500%, #4a44a6 70%, #4b43ac 85%, #463c98 100%); }
.defs { position: absolute; }
.app { width: 96px; height: 96px; flex: none; position: relative; }
.app svg { width: 96px; height: 96px; filter: drop-shadow(0 2px 3px rgba(0, 0, 0, .25)); }
.app.on::after { content: ""; position: absolute; left: 44px; top: 112px; width: 8px; height: 8px; border-radius: 50%; background: #0a0358; }
.app em { position: absolute; right: -11px; top: -11px; width: 46px; height: 46px; border-radius: 50%; background: #df5044; color: #fff; font: 500 26px/46px Inter, sans-serif; text-align: center; }
.sep { width: 2px; height: 120px; background: #140a66; flex: none; }
.s1 { margin: 0 10px 0 14px; }
.s2 { margin: 0 10px 0 12px; }
.bin svg { height: 102px; margin-top: -3px; }
.pc { font: 700 31px "Liberation Sans", sans-serif; fill: #fff; }
```
